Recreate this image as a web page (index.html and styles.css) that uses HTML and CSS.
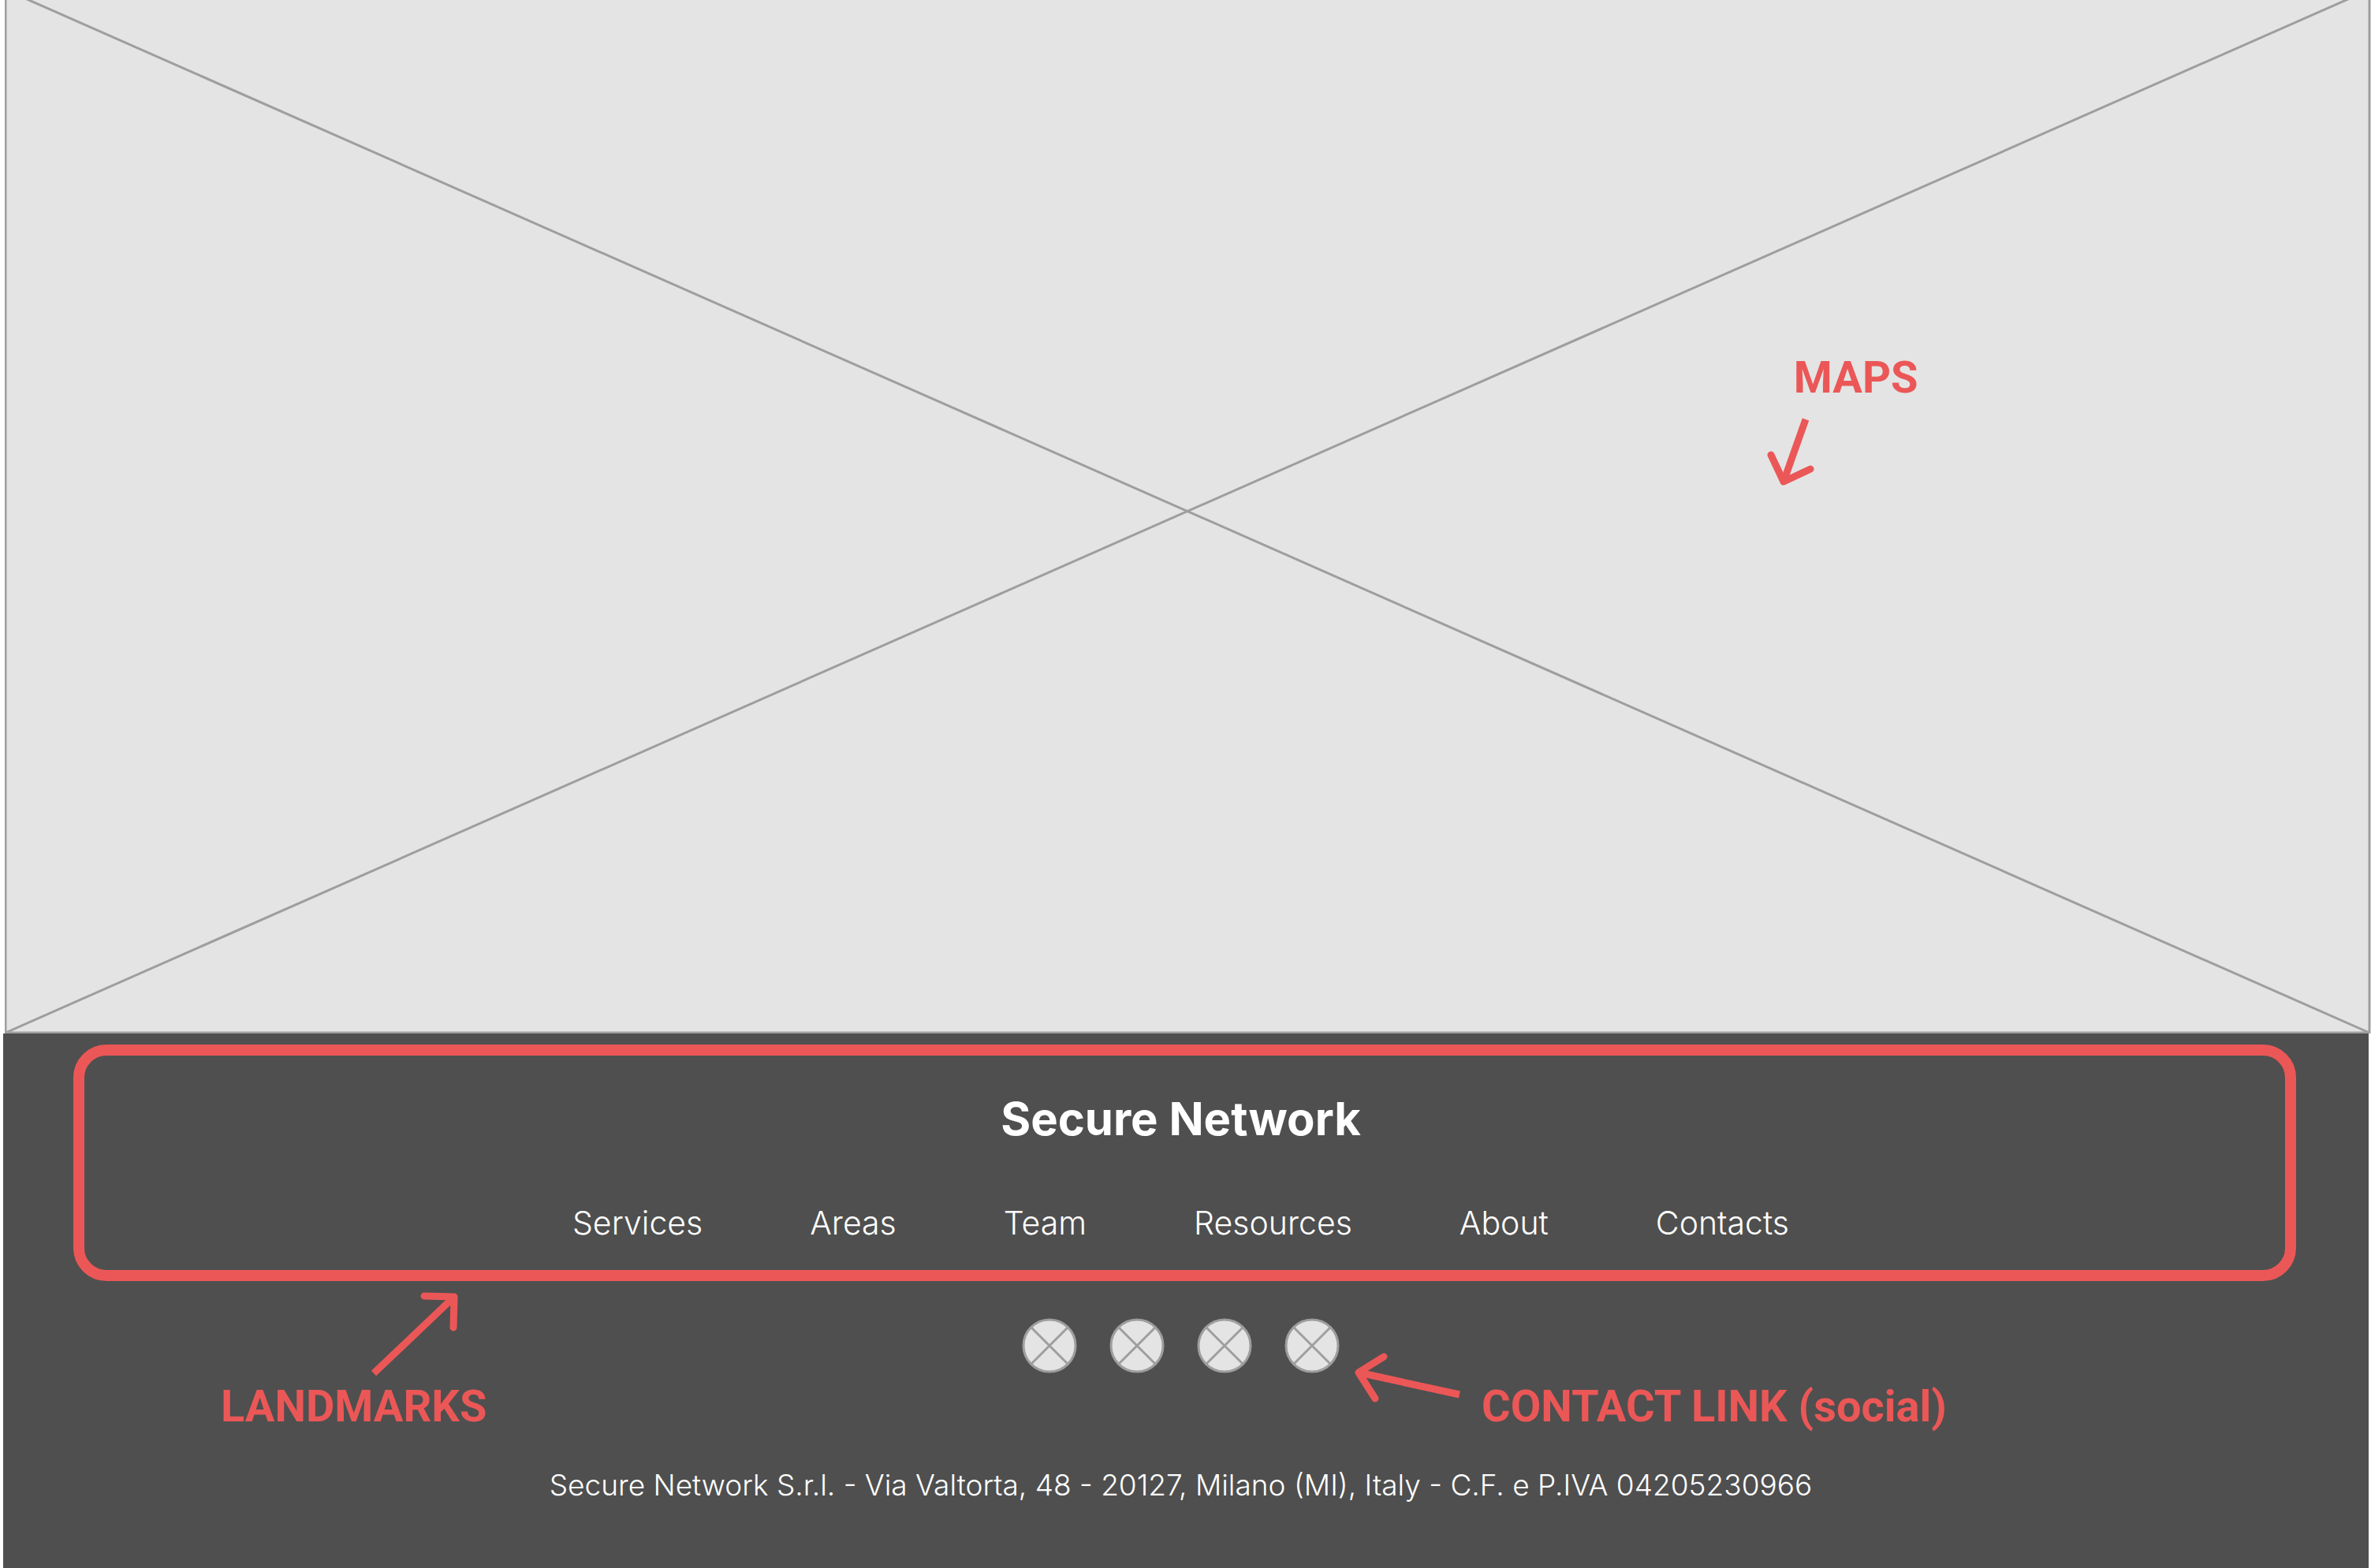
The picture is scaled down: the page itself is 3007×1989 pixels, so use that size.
FILE: index.html
```html
<!DOCTYPE html>
<html lang="en">
<head>
<meta charset="utf-8">
<title>Secure Network</title>
<link rel="stylesheet" href="styles.css">
</head>
<body>
<main class="map">
  <svg class="map-placeholder" viewBox="0 0 3001 1311" aria-hidden="true">
    <rect class="map-area" x="1" y="-13" width="2998" height="1323"/>
    <path class="map-cross" d="M1 -13L2999 1310M2999 -13L1 1310"/>
  </svg>
  <p class="note note-maps">MAPS</p>
  <svg class="arrow arrow-maps" width="64" height="96" viewBox="0 0 64 96" aria-hidden="true">
    <path d="M51 12L23 91"/>
    <path class="arrow-head" d="M7 57L23 91L57 75"/>
  </svg>
</main>
<footer class="footer">
  <div class="landmarks">
    <h2 class="brand">Secure Network</h2>
    <nav class="links" aria-label="Footer">
      <a href="#services">Services</a>
      <a href="#areas">Areas</a>
      <a href="#team">Team</a>
      <a href="#resources">Resources</a>
      <a href="#about">About</a>
      <a href="#contacts">Contacts</a>
    </nav>
  </div>
  <div class="social">
    <a href="#social-1" aria-label="Social 1"><svg viewBox="0 0 70 70"><circle cx="35" cy="35" r="33"/><path d="M12 12L58 58M58 12L12 58"/></svg></a>
    <a href="#social-2" aria-label="Social 2"><svg viewBox="0 0 70 70"><circle cx="35" cy="35" r="33"/><path d="M12 12L58 58M58 12L12 58"/></svg></a>
    <a href="#social-3" aria-label="Social 3"><svg viewBox="0 0 70 70"><circle cx="35" cy="35" r="33"/><path d="M12 12L58 58M58 12L12 58"/></svg></a>
    <a href="#social-4" aria-label="Social 4"><svg viewBox="0 0 70 70"><circle cx="35" cy="35" r="33"/><path d="M12 12L58 58M58 12L12 58"/></svg></a>
  </div>
  <p class="legal">Secure Network S.r.l. - Via Valtorta, 48 - 20127, Milano (MI), Italy - C.F. e P.IVA 04205230966</p>

  <p class="note note-landmarks">LANDMARKS</p>
  <svg class="arrow arrow-landmarks" width="120" height="112" viewBox="0 0 120 112" aria-hidden="true">
    <path d="M8 106L110 9"/>
    <path class="arrow-head" d="M72 8L110 9L109 48"/>
  </svg>
  <p class="note note-contact">CONTACT LINK (social)</p>
  <svg class="arrow arrow-contact" width="140" height="64" viewBox="0 0 140 64" aria-hidden="true">
    <path d="M6 26L134 54"/>
    <path class="arrow-head" d="M38 6L6 26L27 59"/>
  </svg>
</footer>
</body>
</html>
```
FILE: styles.css
```css
* {
  box-sizing: border-box;
}

body {
  margin: 0;
  background: #fff;
  font-family: Inter, "Liberation Sans", sans-serif;
  color: #fff;
}

h2,
p {
  margin: 0;
}

/* Map placeholder */
.map {
  position: relative;
  margin-left: 6px;
}

.map-placeholder {
  display: block;
  width: 100%;
  height: auto;
}

.map-area {
  fill: #e4e4e4;
  stroke: #9e9e9e;
  stroke-width: 3;
}

.map-cross {
  fill: none;
  stroke: #9e9e9e;
  stroke-width: 3;
}

/* Footer */
.footer {
  position: relative;
  margin: 0 3px 0 4px;
  padding: 14px 92px 81px 89px;
  background: #4f4f4f;
}

.landmarks {
  display: flex;
  flex-direction: column;
  align-items: center;
  gap: 76px;
  padding: 48px 10px 36px 0;
  border: 14px solid #eb5757;
  border-radius: 42px;
}

.brand {
  font-size: 58px;
  font-weight: 700;
  line-height: 64px;
}

.links {
  display: flex;
  gap: 136px;
}

.links a {
  color: inherit;
  font-size: 41px;
  font-weight: 300;
  line-height: 48px;
  text-decoration: none;
}

.social {
  display: flex;
  justify-content: center;
  gap: 41px;
  margin-top: 47px;
  padding-right: 10px;
}

.social a {
  width: 70px;
  height: 70px;
}

.social svg {
  display: block;
  fill: #e4e4e4;
  stroke: #9e9e9e;
  stroke-width: 3;
}

.legal {
  margin-top: 118px;
  padding-right: 10px;
  font-size: 37px;
  font-weight: 300;
  line-height: 48px;
  text-align: center;
}

/* Review notes laid over the page */
.note {
  position: absolute;
  color: #eb5757;
  font-family: Roboto, sans-serif;
  font-size: 56px;
  font-weight: 700;
  line-height: 64px;
  white-space: nowrap;
}

.arrow {
  position: absolute;
  fill: none;
  stroke: #eb5757;
  stroke-width: 9;
}

.arrow-head {
  stroke-linecap: round;
  stroke-linejoin: round;
}

.note-maps {
  left: 75.6%;
  top: 447px;
}

.arrow-maps {
  left: 74.4%;
  top: 520px;
}

.note-landmarks {
  left: 9.2%;
  top: 441px;
}

.arrow-landmarks {
  left: 15.4%;
  top: 325px;
}

.note-contact {
  left: 62.5%;
  top: 441px;
}

.arrow-contact {
  left: 57.1%;
  top: 404px;
}
```
